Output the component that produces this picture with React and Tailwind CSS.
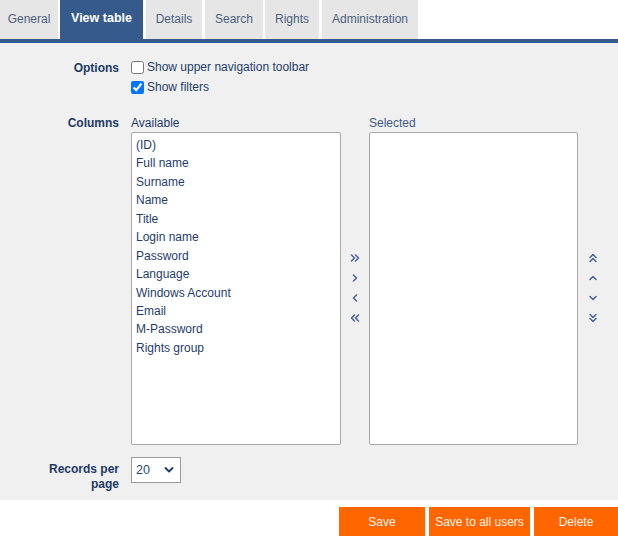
import React from "react";

const tabs = [
  { label: "General", w: "w-[58px]", ml: "ml-0" },
  { label: "View table", w: "w-[83px]", ml: "ml-[2px]", active: true },
  { label: "Details", w: "w-[56px]", ml: "ml-[3px]" },
  { label: "Search", w: "w-[58px]", ml: "ml-[3px]" },
  { label: "Rights", w: "w-[54px]", ml: "ml-[2px]" },
  { label: "Administration", w: "w-[96px]", ml: "ml-[3px]" },
];

const items = [
  "(ID)",
  "Full name",
  "Surname",
  "Name",
  "Title",
  "Login name",
  "Password",
  "Language",
  "Windows Account",
  "Email",
  "M-Password",
  "Rights group",
];

const Chev = ({ dir, double }) => {
  const rot = { right: 0, left: 180, up: -90, down: 90 }[dir];
  return (
    <svg width="10" height="10" viewBox="0 0 10 10" style={{ transform: `rotate(${rot}deg)` }}>
      {double ? (
        <g fill="none" stroke="#4a6897" strokeWidth="1.6" strokeLinecap="round" strokeLinejoin="round">
          <path d="M1.5 2 L4.5 5 L1.5 8" />
          <path d="M5.5 2 L8.5 5 L5.5 8" />
        </g>
      ) : (
        <path d="M3.5 2 L6.5 5 L3.5 8" fill="none" stroke="#4a6897" strokeWidth="1.6" strokeLinecap="round" strokeLinejoin="round" />
      )}
    </svg>
  );
};

export default function App() {
  return (
    <div className="w-[618px] h-[536px] bg-white overflow-hidden text-[12px] font-['Liberation_Sans',Arial,sans-serif] text-[#1f3c6b]">
      <div className="flex h-[39px]">
        {tabs.map((t) => (
          <div
            key={t.label}
            className={`${t.w} ${t.ml} flex items-center justify-center pb-[2px] ${
              t.active ? "bg-[#365a8b] text-white font-bold text-[12.5px]" : "bg-[#e6e6e6] text-[#4c5f80]"
            }`}
          >
            {t.label}
          </div>
        ))}
      </div>
      <div className="h-[4px] bg-[#365a8b]" />
      <div className="h-[457px] bg-[#f0f0f0] pt-[17px]">
        <div className="flex">
          <div className="w-[119px] text-right font-bold text-[#1d3a66] leading-[15px] pt-[1px]">Options</div>
          <div className="ml-[12px] flex flex-col gap-[6px]">
            <label className="flex items-center gap-[3px] h-[14px]">
              <input type="checkbox" className="w-[13px] h-[13px] m-0" />
              <span>Show upper navigation toolbar</span>
            </label>
            <label className="flex items-center gap-[3px] h-[14px]">
              <input type="checkbox" defaultChecked className="w-[13px] h-[13px] m-0" />
              <span>Show filters</span>
            </label>
          </div>
        </div>
        <div className="flex mt-[22px]">
          <div className="w-[119px] text-right font-bold text-[#1d3a66] leading-[15px]">Columns</div>
          <div className="ml-[12px] flex">
            <div className="flex flex-col">
              <div className="leading-[15px] h-[15px]">Available</div>
              <div className="mt-[1px] w-[210px] h-[313px] bg-white border border-[#a8a8a8] rounded-[2px] pl-[4px] pt-[3px]">
                {items.map((i) => (
                  <div key={i} className="h-[18.45px] leading-[18.45px]">
                    {i}
                  </div>
                ))}
              </div>
            </div>
            <div className="w-[28px] flex flex-col justify-center items-center gap-[10px] pt-[14px] pr-[1px]">
              <Chev dir="right" double />
              <Chev dir="right" />
              <Chev dir="left" />
              <Chev dir="left" double />
            </div>
            <div className="flex flex-col">
              <div className="leading-[15px] h-[15px] text-[#3f5a85]">Selected</div>
              <div className="mt-[1px] w-[209px] h-[313px] bg-white border border-[#a8a8a8] rounded-[2px]" />
            </div>
            <div className="w-[30px] flex flex-col justify-center items-center gap-[10px] pt-[14px]">
              <Chev dir="up" double />
              <Chev dir="up" />
              <Chev dir="down" />
              <Chev dir="down" double />
            </div>
          </div>
        </div>
        <div className="flex mt-[12px]">
          <div className="w-[119px] text-right font-bold text-[#1d3a66] leading-[15px] pt-[5px]">
            Records per
            <br />
            page
          </div>
          <div className="ml-[12px] w-[50px] h-[26px] bg-white border border-[#9a9a9a] flex items-center justify-between pl-[4px] pr-[6px]">
            <span className="text-[#2a4a7a] text-[12.5px]">20</span>
            <svg width="10" height="8" viewBox="0 0 10 8">
              <path d="M1.5 2 L5 5.5 L8.5 2" fill="none" stroke="#1d3a66" strokeWidth="1.8" strokeLinecap="round" strokeLinejoin="round" />
            </svg>
          </div>
        </div>
      </div>
      <div className="flex justify-end mt-[7px] gap-[4px]">
        <button className="w-[86px] h-[30px] bg-[#ff6600] text-[#fff3ea]">Save</button>
        <button className="w-[101px] h-[30px] bg-[#ff6600] text-[#fff3ea]">Save to all users</button>
        <button className="w-[84px] h-[30px] bg-[#ff6600] text-[#fff3ea]">Delete</button>
      </div>
    </div>
  );
}
